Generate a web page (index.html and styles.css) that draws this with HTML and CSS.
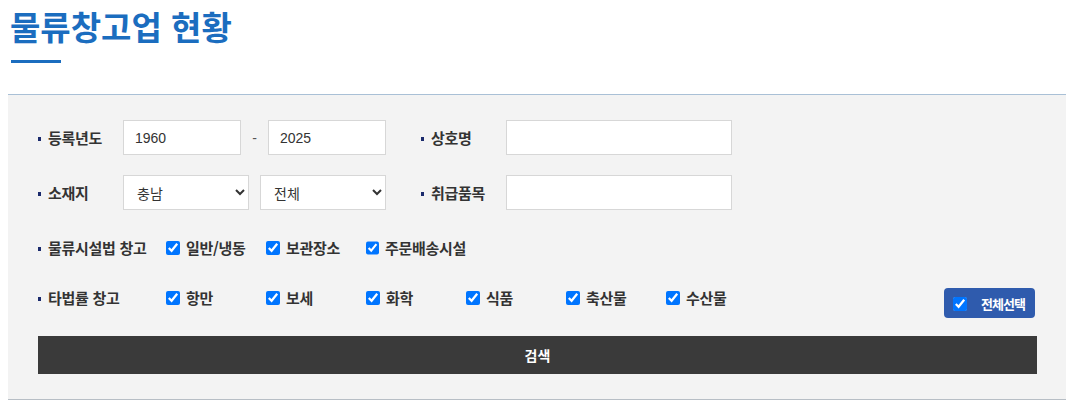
FILE: index.html
```html
<!DOCTYPE html>
<html lang="ko">
<head>
<meta charset="utf-8">
<title>물류창고업 현황</title>
<link rel="stylesheet" href="styles.css">
</head>
<body>
<div class="page">
  <h1 class="title">물류창고업 현황</h1>
  <div class="title-bar"></div>

  <form class="panel">
    <div class="row">
      <div class="field field-left">
        <span class="label">등록년도</span>
        <input class="input input-year" type="text" value="1960">
        <span class="dash">-</span>
        <input class="input input-year" type="text" value="2025">
      </div>
      <div class="field">
        <span class="label">상호명</span>
        <input class="input input-wide" type="text">
      </div>
    </div>

    <div class="row">
      <div class="field field-left">
        <span class="label">소재지</span>
        <select class="select">
          <option>충남</option>
        </select>
        <select class="select select-second">
          <option>전체</option>
        </select>
      </div>
      <div class="field">
        <span class="label">취급품목</span>
        <input class="input input-wide" type="text">
      </div>
    </div>

    <div class="row row-check">
      <span class="label label-long">물류시설법 창고</span>
      <label class="check"><input type="checkbox" checked><span>일반/냉동</span></label>
      <label class="check"><input type="checkbox" checked><span>보관장소</span></label>
      <label class="check"><input type="checkbox" checked><span>주문배송시설</span></label>
    </div>

    <div class="row row-check row-last">
      <span class="label label-long">타법률 창고</span>
      <label class="check"><input type="checkbox" checked><span>항만</span></label>
      <label class="check"><input type="checkbox" checked><span>보세</span></label>
      <label class="check"><input type="checkbox" checked><span>화학</span></label>
      <label class="check"><input type="checkbox" checked><span>식품</span></label>
      <label class="check"><input type="checkbox" checked><span>축산물</span></label>
      <label class="check"><input type="checkbox" checked><span>수산물</span></label>
      <label class="select-all"><input type="checkbox" checked><span>전체선택</span></label>
    </div>

    <button class="search" type="button">검색</button>
  </form>
</div>
</body>
</html>
```

FILE: styles.css
```css
* {
  box-sizing: border-box;
}

body {
  margin: 0;
  background: #ffffff;
  font-family: "Noto Sans CJK KR", "Noto Sans", sans-serif;
  color: #333333;
}

.page {
  padding-top: 4px;
}

.title {
  margin: 0 0 0 10px;
  font-size: 33px;
  line-height: 44px;
  font-weight: 700;
  letter-spacing: 0;
  color: #1b6dbf;
}

.title-bar {
  width: 50px;
  height: 3px;
  margin: 12px 0 0 11px;
  background: #1b6dbf;
}

.panel {
  width: 1058px;
  margin: 31px 0 0 8px;
  padding: 25px 29px 25px 30px;
  background: #f3f3f3;
  border-top: 1px solid #a9c0d6;
  border-bottom: 1px solid #b7bec5;
}

.row {
  display: flex;
  align-items: center;
  height: 35px;
  margin-bottom: 20px;
}

.row-last {
  margin-top: -5px;
  margin-bottom: 21px;
}

.field {
  display: flex;
  align-items: center;
}

.field-left {
  width: 348px;
  margin-right: 35px;
}

.label {
  position: relative;
  display: inline-block;
  width: 85px;
  padding-left: 10px;
  font-size: 15px;
  font-weight: 700;
  letter-spacing: -0.3px;
  color: #333333;
  white-space: nowrap;
}

.label::before {
  content: "";
  position: absolute;
  left: 0;
  top: 50%;
  width: 3px;
  height: 4px;
  margin-top: -1px;
  background: #1a2a6c;
}

.label-long {
  width: 128px;
}

.input,
.select {
  height: 35px;
  border: 1px solid #d7d7d7;
  background: #ffffff;
  font-family: "Liberation Sans", "Noto Sans CJK KR", sans-serif;
  font-size: 14px;
  color: #333333;
  padding: 0 11px;
  margin: 0;
  border-radius: 0;
  outline: none;
}

.input-year {
  width: 118px;
}

.dash {
  width: 27px;
  text-align: center;
  font-family: "Liberation Sans", sans-serif;
  font-size: 14px;
  color: #555555;
}

.input-wide {
  width: 226px;
}

.select {
  width: 126px;
  font-family: "Noto Sans CJK KR", sans-serif;
  padding: 0 8px 0 9px;
}

.select-second {
  margin-left: 11px;
}

.check {
  display: flex;
  align-items: center;
  width: 100px;
  font-size: 15px;
  font-weight: 700;
  letter-spacing: -0.3px;
  color: #333333;
  white-space: nowrap;
}

.check input {
  width: 14px;
  height: 14px;
  margin: 0 6px 0 0;
}

.select-all {
  display: flex;
  align-items: center;
  align-self: flex-start;
  margin: 8px 2px 0 auto;
  height: 30px;
  width: 91px;
  padding-left: 9px;
  background: #2f5bad;
  border-radius: 4px;
  color: #ffffff;
  font-size: 13px;
  font-weight: 700;
  letter-spacing: -1px;
  white-space: nowrap;
}

.select-all input {
  width: 14px;
  height: 14px;
  margin: 2px 14px 0 0;
}

.search {
  display: block;
  width: 999px;
  height: 38px;
  margin: 0;
  border: none;
  background: #3a3a3a;
  color: #ffffff;
  font-family: "Noto Sans CJK KR", sans-serif;
  font-size: 14px;
  font-weight: 700;
  cursor: pointer;
}
```
